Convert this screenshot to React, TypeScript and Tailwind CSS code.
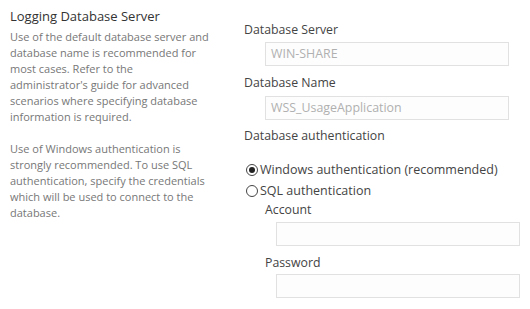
const font = { fontFamily: '"Open Sans", "Noto Sans", sans-serif' };

const intro = [
  "Use of the default database server and",
  "database name is recommended for",
  "most cases. Refer to the",
  "administrator's guide for advanced",
  "scenarios where specifying database",
  "information is required.",
];

const auth = [
  "Use of Windows authentication is",
  "strongly recommended. To use SQL",
  "authentication, specify the credentials",
  "which will be used to connect to the",
  "database.",
];

function Field({ value }: { value?: string }) {
  return (
    <div className="h-[24px] whitespace-nowrap border border-[#e1e1e1] bg-[#fdfdfd] px-[5px] text-[12.4px] leading-[22px] text-[#b0b0b0]">
      {value}
    </div>
  );
}

function Radio({ checked, label }: { checked?: boolean; label: string }) {
  return (
    <div className="flex h-[21px] items-center gap-[2px]">
      <span className="flex h-[12px] w-[12px] items-center justify-center rounded-full border border-[#444]">
        {checked && <span className="h-[6px] w-[6px] rounded-full bg-[#222]" />}
      </span>
      <span className="text-[12.5px] text-[#444]">{label}</span>
    </div>
  );
}

export default function App() {
  return (
    <div className="flex h-[309px] w-[530px] bg-white" style={font}>
      <div className="w-[233px] pl-[10px] pt-[7px]">
        <div className="text-[13px] leading-[18px] text-[#333]">Logging Database Server</div>
        <div className="mt-[4px] text-[11px] leading-[16px] text-[#777]">
          {intro.map((l) => (
            <div key={l} className="whitespace-nowrap">{l}</div>
          ))}
          <div className="h-[16px]" />
          {auth.map((l) => (
            <div key={l} className="whitespace-nowrap">{l}</div>
          ))}
        </div>
      </div>

      <div className="flex-1 pt-[21px] text-[12.3px] leading-[18px] text-[#444]">
        <div className="pl-[11px]">Database Server</div>
        <div className="ml-[32px] mr-[21px] mt-[3px]">
          <Field value="WIN-SHARE" />
        </div>
        <div className="mt-[8px] pl-[11px]">Database Name</div>
        <div className="ml-[32px] mr-[21px] mt-[4px]">
          <Field value="WSS_UsageApplication" />
        </div>
        <div className="mt-[7px] pl-[11px]">Database authentication</div>
        <div className="mt-[14px] pl-[13px]">
          <Radio checked label="Windows authentication (recommended)" />
          <Radio label="SQL authentication" />
        </div>
        <div className="pl-[32px]">
          <div>Account</div>
          <div className="ml-[11px] mr-[10px] mt-[3px]">
            <Field />
          </div>
          <div className="mt-[8px]">Password</div>
          <div className="ml-[11px] mr-[10px] mt-[2px]">
            <Field />
          </div>
        </div>
      </div>
    </div>
  );
}
